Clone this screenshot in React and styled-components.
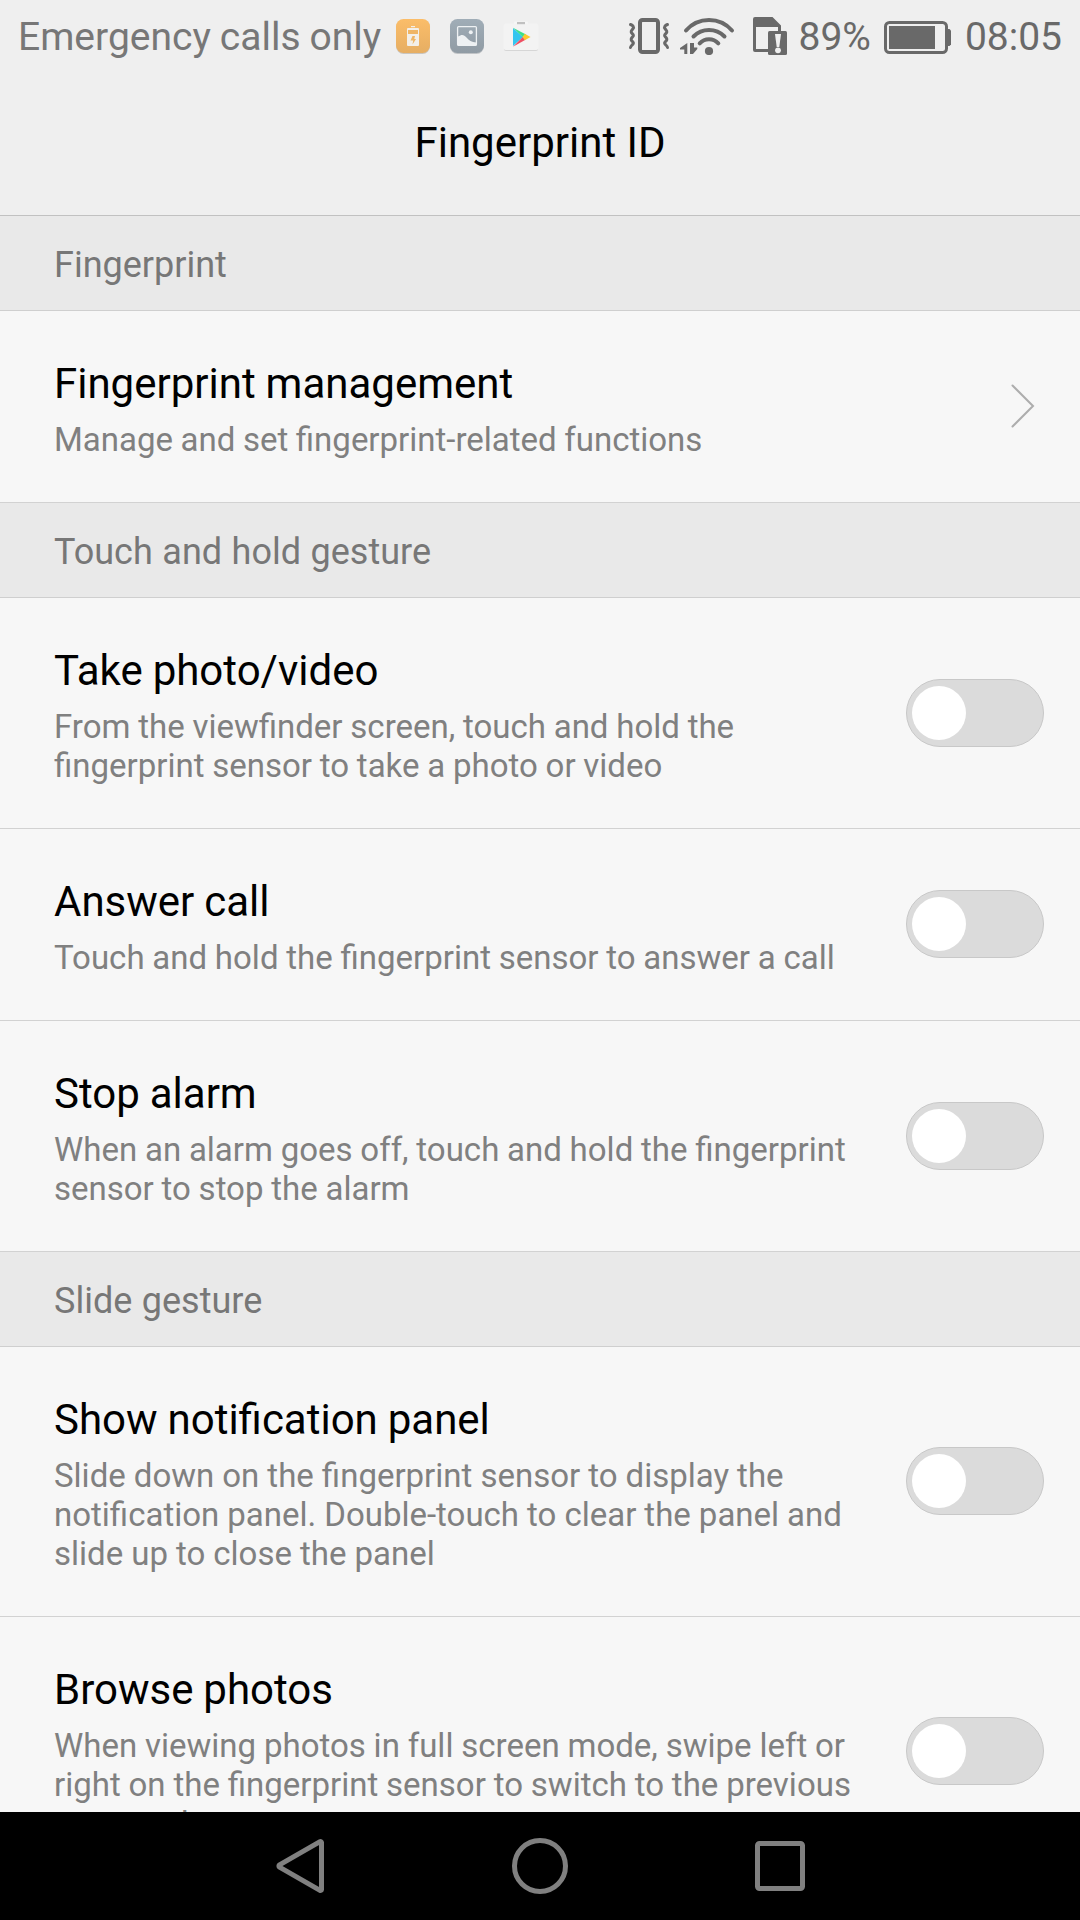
import React from "react";
import styled, { createGlobalStyle } from "styled-components";

const GlobalStyle = createGlobalStyle`
  *, *::before, *::after { box-sizing: border-box; }
  body { margin: 0; background: #f7f7f7; }
`;

const Screen = styled.div`
  width: 1080px;
  height: 1920px;
  display: flex;
  flex-direction: column;
  overflow: hidden;
  background: #f7f7f7;
  font-family: Roboto, sans-serif;
  color: #000;
`;

const Header = styled.header`
  flex: none;
  height: 216px;
  background: #efefef;
  border-bottom: 1px solid #c1c1c1;
`;

const StatusBar = styled.div`
  height: 72px;
  display: flex;
  align-items: center;
  justify-content: space-between;
  padding: 0 18px;
`;

const StatusGroup = styled.div`
  display: flex;
  align-items: center;
  height: 72px;
`;

const StatusText = styled.span`
  margin-left: ${(p) => p.$gap || 0}px;
  padding-top: 2px;
  font-size: 39px;
  line-height: 46px;
  word-spacing: -0.7px;
  white-space: nowrap;
  color: ${(p) => p.$color};
`;

const StatusIcon = styled.svg`
  flex: none;
  display: block;
  margin-left: ${(p) => p.$gap}px;
`;

const Title = styled.h1`
  margin: 0;
  padding-top: 46px;
  font-size: 42px;
  line-height: 49px;
  font-weight: 400;
  text-align: center;
`;

const Content = styled.main`
  flex: 1;
  min-height: 0;
  overflow: hidden;
`;

const SectionHeader = styled.h2`
  margin: 0;
  height: 95px;
  padding: 28px 54px 0;
  font-size: 36px;
  line-height: 42px;
  font-weight: 400;
  word-spacing: 0.6px;
  color: #777;
  background: #e9e9e9;
  border-bottom: 1px solid #cfcfcf;
`;

const Row = styled.div`
  display: flex;
  align-items: center;
  justify-content: space-between;
  gap: 36px;
  padding: 0 36px 0 54px;
  border-bottom: 1px solid #d2d2d2;
`;

const RowText = styled.div`
  flex: 1;
  min-width: 0;
  padding: 48px 0 43px;
`;

const RowTitle = styled.div`
  font-size: 42px;
  line-height: 49px;
  word-spacing: -0.5px;
`;

const RowDescription = styled.div`
  margin-top: 12px;
  font-size: 33px;
  line-height: 39px;
  word-spacing: ${(p) => p.$wordSpacing}px;
  color: #808080;
`;

const Switch = styled.button`
  flex: none;
  display: flex;
  align-items: center;
  width: 138px;
  height: 68px;
  margin-top: -1px;
  padding: 0 5px;
  border: 1px solid #c8c8c8;
  border-radius: 34px;
  background: #dbdbdb;
`;

const Knob = styled.span`
  width: 54px;
  height: 54px;
  border-radius: 50%;
  background: #fff;
`;

const Chevron = styled.svg`
  flex: none;
  margin: -2px 9px 0 0;
`;

const NavBar = styled.nav`
  flex: none;
  height: 108px;
  display: flex;
  align-items: center;
  justify-content: center;
  gap: 120px;
  background: #000;
`;

const NavButton = styled.button`
  width: 120px;
  height: 108px;
  padding: 0;
  border: 0;
  background: none;
  display: grid;
  place-items: center;
`;

const BatteryAppIcon = () => (
  <StatusIcon $gap={14} width="36" height="36" viewBox="0 0 36 36">
    <defs>
      <linearGradient id="orange" x1="0" y1="0" x2="0" y2="1">
        <stop offset="0" stopColor="#fbbd69" />
        <stop offset="1" stopColor="#e6ae63" />
      </linearGradient>
    </defs>
    <rect x="1" y="2" width="34" height="34" rx="7.5" fill="#c9c5bf" />
    <rect x="1" y="1" width="34" height="34" rx="7.5" fill="url(#orange)" />
    <rect x="16" y="8" width="4" height="1.2" fill="#f3efe8" />
    <path d="M13 10h10a1 1 0 0 1 1 1v16a1 1 0 0 1-1 1H13a1 1 0 0 1-1-1V11a1 1 0 0 1 1-1z" fill="#f3efe8" />
    <rect x="13" y="12" width="10" height="4" fill="#efb565" />
    <path d="M17.500 18h2.500l-.7 3H21l-3.500 5.500.7-4H15.500z" fill="#efb565" />
  </StatusIcon>
);

const GalleryAppIcon = () => (
  <StatusIcon $gap={18} width="36" height="36" viewBox="0 0 36 36">
    <defs>
      <linearGradient id="slate" x1="0" y1="0" x2="0" y2="1">
        <stop offset="0" stopColor="#a0adb7" />
        <stop offset="1" stopColor="#909ba4" />
      </linearGradient>
    </defs>
    <rect x="1" y="2" width="34" height="34" rx="7.5" fill="#c0c3c6" />
    <rect x="1" y="1" width="34" height="34" rx="7.5" fill="url(#slate)" />
    <rect x="8.600" y="8.600" width="18.800" height="18.800" rx="1" fill="none" stroke="#eef1f3" strokeWidth="1.3" />
    <circle cx="21.800" cy="14.200" r="2" fill="#eef1f3" />
    <path d="M9 18.500c4-2.500 6-2 8.500 1s5 4.500 10 5V27H9z" fill="#eef1f3" />
  </StatusIcon>
);

const PlayStoreIcon = () => (
  <StatusIcon $gap={18} width="36" height="36" viewBox="0 0 36 36">
    <rect x="1" y="6" width="34" height="27" rx="2" fill="#d6d6d6" />
    <path d="M11 6V4.500a1 1 0 0 1 1-1h12a1 1 0 0 1 1 1V6z" fill="#f6f6f6" />
    <rect x="0.700" y="5.500" width="34.600" height="26.500" rx="2" fill="#f3f3f3" />
    <rect x="14" y="4" width="8" height="2.200" fill="#c0c0c0" />
    <path d="M10 10v18l10-9z" fill="#35c5ef" />
    <path d="M10 9.700l13 6.800L20 19.200z" fill="#3de08a" />
    <path d="M10 28.700l12.500-7L20 18.800z" fill="#ee4f63" />
    <path d="M21.800 15.700l5.700 3.300-5.700 3.200-2.300-3.200z" fill="#fdc92f" />
  </StatusIcon>
);

const VibrateIcon = () => (
  <StatusIcon $gap={0} width="42" height="38" viewBox="0 0 42 38">
    <g fill="none" stroke="#696969">
      <rect x="12" y="3" width="18" height="32" rx="2.500" strokeWidth="4" />
      <g strokeWidth="3" strokeLinecap="round" strokeLinejoin="round">
        <path d="M2.500 7.500C5 8.500 6.200 10 5 11.700S3 13.500 3.200 15 6.500 17.500 5 19.400 3 21 3.200 22.700 6.500 25 5 27 3 28.500 2.500 30.500" />
        <path d="M39.500 7.500C37 8.500 35.800 10 37 11.700S39 13.500 38.800 15 35.500 17.500 37 19.400 39 21 38.800 22.700 35.500 25 37 27 39 28.500 39.500 30.500" />
      </g>
    </g>
  </StatusIcon>
);

const WifiIcon = () => (
  <StatusIcon $gap={10} width="56" height="38" viewBox="0 0 56 38">
    <g fill="none" stroke="#696969" strokeWidth="4" strokeLinecap="round">
      <path d="M6 13.500A30.400 30.400 0 0 1 52 13.500" />
      <path d="M13.500 19.500A21.700 21.700 0 0 1 44.500 19.500" />
      <path d="M19.700 26.300A12.700 12.700 0 0 1 38.300 26.300" />
    </g>
    <circle cx="29" cy="34" r="4.100" fill="#696969" />
    <path d="M7.300 26v11H4.300v-4.500H0V31z M10 26h4v4.500h3.300V32L13 37h-3z" fill="#696969" />
  </StatusIcon>
);

const SimAlertIcon = () => (
  <StatusIcon $gap={16} width="36" height="40" viewBox="0 0 36 40">
    <path d="M3 1h17.500l8.500 8.500V16h-3v-5H4v22h12v3H3a2 2 0 0 1-2-2V3a2 2 0 0 1 2-2z" fill="#696969" />
    <rect x="16" y="15" width="19" height="24" rx="1.500" fill="#696969" />
    <path d="M23 18h6l-1.700 13h-2.600z" fill="#efefef" />
    <circle cx="26" cy="34.300" r="2.900" fill="#efefef" />
  </StatusIcon>
);

const BatteryIcon = () => (
  <StatusIcon $gap={13} width="68" height="38" viewBox="0 0 68 38">
    <rect x="1.500" y="5.500" width="61" height="30" rx="4" fill="none" stroke="#696969" strokeWidth="3" />
    <path d="M64 12h1.500l1.500 1.500v14L65.500 29H64z" fill="#696969" />
    <rect x="5" y="9" width="46" height="23" fill="#696969" />
  </StatusIcon>
);

const sections = [
  {
    title: "Fingerprint",
    rows: [
      { title: "Fingerprint management", text: "Manage and set fingerprint-related functions", wordSpacing: -0.6, link: true },
    ],
  },
  {
    title: "Touch and hold gesture",
    rows: [
      { title: "Take photo/video", text: "From the viewfinder screen, touch and hold the fingerprint sensor to take a photo or video" },
      { title: "Answer call", text: "Touch and hold the fingerprint sensor to answer a call" },
      { title: "Stop alarm", text: "When an alarm goes off, touch and hold the fingerprint sensor to stop the alarm" },
    ],
  },
  {
    title: "Slide gesture",
    rows: [
      {
        title: "Show notification panel",
        text: "Slide down on the fingerprint sensor to display the notification panel. Double-touch to clear the panel and slide up to close the panel",
        wordSpacing: -0.15,
      },
      {
        title: "Browse photos",
        text: "When viewing photos in full screen mode, swipe left or right on the fingerprint sensor to switch to the previous or next photo",
        wordSpacing: -0.35,
      },
    ],
  },
];

const SettingRow = ({ title, text, link, wordSpacing = -0.42 }) => (
  <Row>
    <RowText>
      <RowTitle>{title}</RowTitle>
      <RowDescription $wordSpacing={wordSpacing}>{text}</RowDescription>
    </RowText>
    {link ? (
      <Chevron width="24" height="44" viewBox="0 0 24 44">
        <path d="M1.500 1.500L22 22 1.500 42.500" fill="none" stroke="#adadad" strokeWidth="2" strokeLinecap="round" />
      </Chevron>
    ) : (
      <Switch role="switch" aria-checked="false" aria-label={title}>
        <Knob />
      </Switch>
    )}
  </Row>
);

export default function App() {
  return (
    <Screen>
      <GlobalStyle />
      <Header>
        <StatusBar>
          <StatusGroup>
            <StatusText $color="#777">Emergency calls only</StatusText>
            <BatteryAppIcon />
            <GalleryAppIcon />
            <PlayStoreIcon />
          </StatusGroup>
          <StatusGroup>
            <VibrateIcon />
            <WifiIcon />
            <SimAlertIcon />
            <StatusText $color="#696969" $gap={10}>89%</StatusText>
            <BatteryIcon />
            <StatusText $color="#696969" $gap={13}>08:05</StatusText>
          </StatusGroup>
        </StatusBar>
        <Title>Fingerprint ID</Title>
      </Header>
      <Content>
        {sections.map((s) => (
          <section key={s.title}>
            <SectionHeader>{s.title}</SectionHeader>
            {s.rows.map((r) => (
              <SettingRow key={r.title} {...r} />
            ))}
          </section>
        ))}
      </Content>
      <NavBar>
        <NavButton aria-label="Back">
          <svg width="52" height="58" viewBox="0 0 52 58">
            <path d="M47.500 5.500v47a1 1 0 0 1-1.500.8L5.500 30.200a1.500 1.500 0 0 1 0-2.400L46 4.700a1 1 0 0 1 1.500.8z" fill="none" stroke="#808080" strokeWidth="5" strokeLinejoin="round" />
          </svg>
        </NavButton>
        <NavButton aria-label="Home">
          <svg width="58" height="58" viewBox="0 0 58 58">
            <circle cx="29" cy="29" r="25.500" fill="none" stroke="#808080" strokeWidth="5" />
          </svg>
        </NavButton>
        <NavButton aria-label="Recent apps">
          <svg width="52" height="52" viewBox="0 0 52 52">
            <rect x="3.500" y="3.500" width="45" height="45" rx="2" fill="none" stroke="#808080" strokeWidth="5" />
          </svg>
        </NavButton>
      </NavBar>
    </Screen>
  );
}
